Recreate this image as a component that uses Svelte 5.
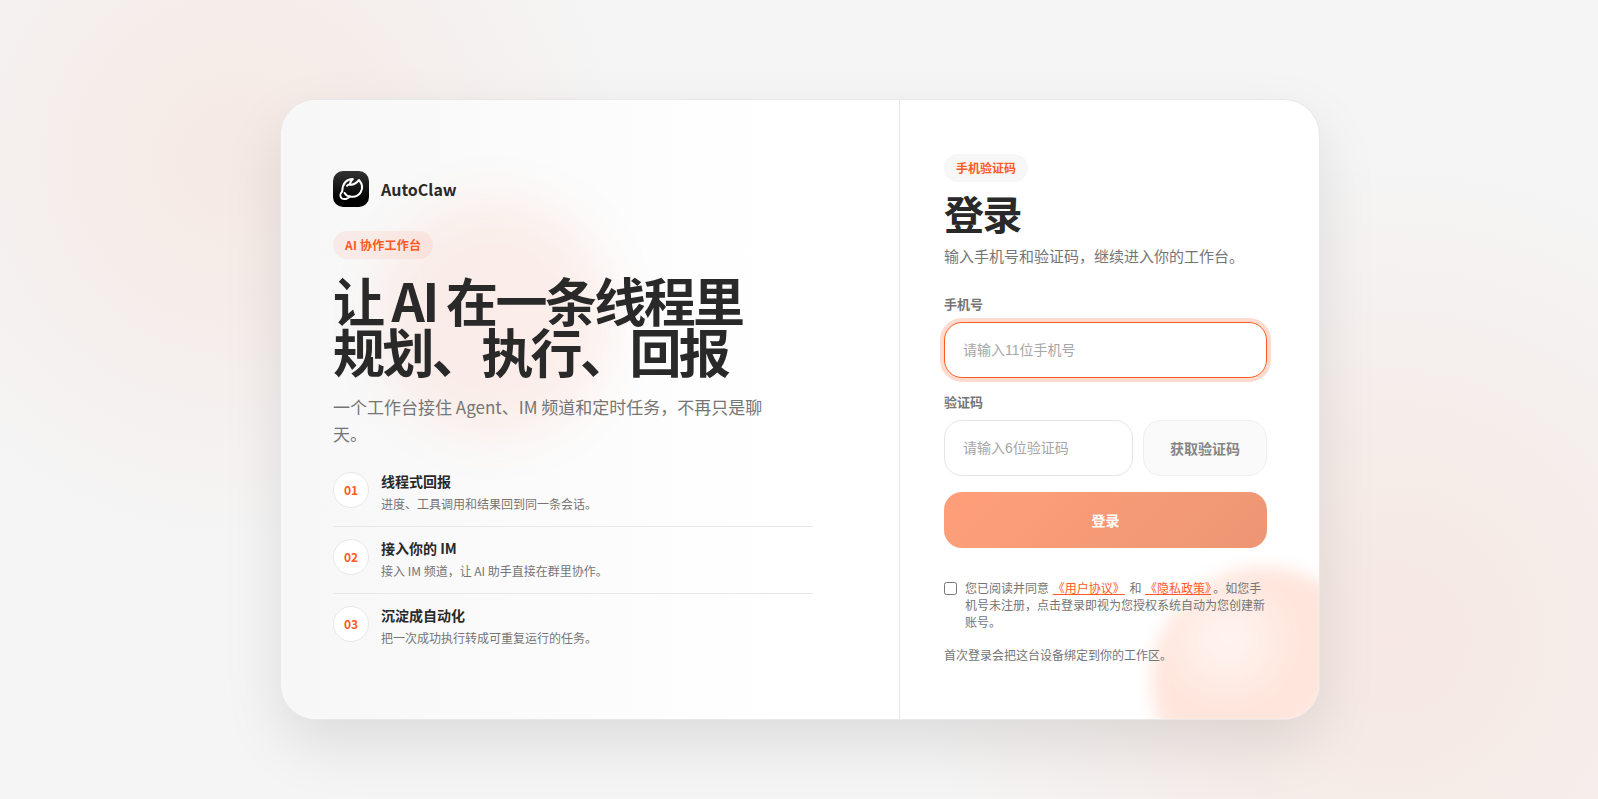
<script>
  let phone = '';
  let code = '';
  let agreed = false;

  const features = [
    { no: '01', title: '线程式回报', desc: '进度、工具调用和结果回到同一条会话。' },
    { no: '02', title: '接入你的 IM', desc: '接入 IM 频道，让 AI 助手直接在群里协作。' },
    { no: '03', title: '沉淀成自动化', desc: '把一次成功执行转成可重复运行的任务。' }
  ];

  function focusOnMount(node) {
    node.focus();
  }
</script>

<main class="page">
  <div class="card">
    <section class="intro">
      <div class="brand">
        <svg class="logo" viewBox="0 0 36 36" aria-hidden="true">
          <defs>
            <linearGradient id="logo-bg" x1="0" y1="0" x2="0" y2="1">
              <stop offset="0" stop-color="#333" />
              <stop offset="0.8" stop-color="#000" />
            </linearGradient>
          </defs>
          <rect width="36" height="36" rx="10" fill="url(#logo-bg)" />
          <g fill="none" stroke="#fff" stroke-width="2" stroke-linecap="round" stroke-linejoin="round">
            <path d="M9.2 20.4 C9.6 13 13 8.2 19.8 8 C18 9.8 16.8 11.6 17 13.6 C20.6 14.4 23.6 11.8 26 9 C29.4 13 30 17.6 27.6 21.4 C25.2 25 21.4 26.4 17 25.4" />
            <path d="M17 13.6 C16 13.2 14.8 13.8 14 14.8" />
            <path d="M9.2 20.4 C7.2 22.4 6.8 25.4 8.6 27.2 C11 28.9 14.8 28 17 25.4 C14.4 25.2 12.6 24 11.6 22" />
          </g>
        </svg>
        <span class="brand-name">AutoClaw</span>
      </div>

      <span class="badge badge-warm">AI 协作工作台</span>
      <h1>让 AI 在一条线程里<br />规划、执行、回报</h1>
      <p class="lead">一个工作台接住 Agent、IM 频道和定时任务，不再只是聊天。</p>

      <ol class="features">
        {#each features as item (item.no)}
          <li>
            <span class="no">{item.no}</span>
            <div>
              <h3>{item.title}</h3>
              <p>{item.desc}</p>
            </div>
          </li>
        {/each}
      </ol>
    </section>

    <section class="login">
      <span class="badge">手机验证码</span>
      <h2>登录</h2>
      <p class="sub">输入手机号和验证码，继续进入你的工作台。</p>

      <form on:submit|preventDefault>
        <label class="field-label" for="phone">手机号</label>
        <input id="phone" class="field" type="tel" placeholder="请输入11位手机号" bind:value={phone} use:focusOnMount />

        <label class="field-label" for="code">验证码</label>
        <div class="code-row">
          <input id="code" class="field" type="text" placeholder="请输入6位验证码" bind:value={code} />
          <button type="button" class="send" disabled={!phone}>获取验证码</button>
        </div>

        <button type="submit" class="submit" disabled={!phone || !code}>登录</button>

        <div class="agree">
          <input id="agree" type="checkbox" bind:checked={agreed} />
          <label for="agree">您已阅读并同意 <a href="#terms">《用户协议》</a> 和 <a href="#privacy">《隐私政策》</a>。如您手机号未注册，点击登录即视为您授权系统自动为您创建新账号。</label>
        </div>
      </form>

      <p class="hint">首次登录会把这台设备绑定到你的工作区。</p>
    </section>
  </div>
</main>

<style>
  :global(body) {
    background: #f5f5f5;
  }

  .page {
    --accent: #ff5a1f;
    --ink: #292929;
    --muted: #757575;
    --line: #e8e8e8;
    box-sizing: border-box;
    min-height: 100vh;
    padding: 20px 0 0 2px;
    display: flex;
    align-items: center;
    justify-content: center;
    font-family: "Noto Sans CJK SC", sans-serif;
    color: var(--ink);
    background:
      radial-gradient(circle at 15% 20%, rgba(255, 96, 40, 0.08), rgba(255, 96, 40, 0.06) 8vw, transparent 24vw),
      radial-gradient(circle at 87% 80%, rgba(255, 96, 40, 0.09), rgba(255, 96, 40, 0.06) 12vw, transparent 30vw),
      #f5f5f5;
  }

  .page *,
  .page *::before {
    box-sizing: border-box;
  }

  h1, h2, h3, p, ol {
    margin: 0;
    padding: 0;
  }

  .card {
    width: 100%;
    max-width: 1040px;
    min-height: 621px;
    display: grid;
    grid-template-columns: 1fr 420px;
    border: 1px solid var(--line);
    border-radius: 36px;
    overflow: hidden;
    background: #fff;
    box-shadow: 0 24px 60px rgba(0, 0, 0, 0.1);
  }

  .intro,
  .login {
    position: relative;
    isolation: isolate;
    display: flex;
    flex-direction: column;
    align-items: flex-start;
    justify-content: center;
  }

  .intro {
    padding: 0 52px;
    background: linear-gradient(90deg, #f7f7f7, #fff 80%);
  }

  .intro::before {
    content: "";
    position: absolute;
    z-index: -1;
    left: 94px;
    top: 98px;
    width: 240px;
    height: 240px;
    border-radius: 50%;
    background: rgba(255, 84, 40, 0.08);
    filter: blur(24px);
  }

  .login {
    padding: 0 52px 2px 44px;
    border-left: 1px solid var(--line);
    overflow: hidden;
  }

  .login::before {
    content: "";
    position: absolute;
    z-index: -1;
    right: -58px;
    bottom: -74px;
    width: 226px;
    height: 226px;
    border-radius: 50%;
    background: radial-gradient(circle at 34% 32%, #fff5f2, #ffe6dd 32%, #fee7df);
    filter: blur(8px);
  }

  .brand {
    display: flex;
    align-items: center;
    gap: 12px;
    margin-bottom: 24px;
  }

  .logo {
    width: 36px;
    height: 36px;
  }

  .brand-name {
    font-size: 16px;
    font-weight: 700;
  }

  .badge {
    padding: 0 12px;
    border-radius: 14px;
    font-size: 12px;
    line-height: 28px;
    font-weight: 700;
    color: var(--accent);
    background: #f7f7f7;
  }

  .badge-warm {
    background: rgba(255, 87, 34, 0.08);
    letter-spacing: 0.02em;
  }

  h1 {
    margin-top: 15px;
    font-size: 52px;
    line-height: 51px;
    font-weight: 700;
    letter-spacing: -0.05em;
  }

  .lead {
    max-width: 440px;
    margin-top: 17px;
    font-size: 17px;
    line-height: 27px;
    color: var(--muted);
  }

  .features {
    width: 100%;
    max-width: 480px;
    margin-top: 13px;
    list-style: none;
  }

  .features li {
    display: flex;
    gap: 12px;
    padding: 12px 0;
  }

  .features li + li {
    border-top: 1px solid var(--line);
  }

  .features li:last-child {
    padding-bottom: 0;
  }

  .no {
    flex: none;
    width: 36px;
    height: 36px;
    border: 1px solid var(--line);
    border-radius: 50%;
    background: #fff;
    color: var(--accent);
    font-size: 12px;
    line-height: 34px;
    font-weight: 700;
    text-align: center;
  }

  .features h3 {
    font-size: 14px;
    line-height: 18px;
    font-weight: 700;
  }

  .features p {
    margin-top: 5px;
    font-size: 12px;
    line-height: 18px;
    color: var(--muted);
  }

  .features li > div {
    padding-bottom: 1px;
  }

  h2 {
    margin-top: 8px;
    font-size: 40px;
    line-height: 46px;
    font-weight: 700;
    letter-spacing: -0.04em;
  }

  .sub {
    margin-top: 8px;
    font-size: 15px;
    line-height: 24px;
    color: var(--muted);
  }

  form {
    width: 100%;
    margin-top: 26px;
    display: flex;
    flex-direction: column;
  }

  .field-label {
    margin-bottom: 8px;
    font-size: 13px;
    line-height: 20px;
    font-weight: 700;
    color: var(--muted);
  }

  .field {
    width: 100%;
    min-width: 0;
    height: 56px;
    margin-bottom: 14px;
    padding: 0 18px;
    border: 1px solid #e4e4e4;
    border-radius: 18px;
    outline: none;
    background: #fff;
    color: var(--ink);
    font: 14px "Liberation Sans", "Noto Sans CJK SC", sans-serif;
  }

  .field::placeholder {
    color: #a6a6a6;
  }

  .field:focus {
    border-color: var(--accent);
    box-shadow: 0 0 0 4px rgba(255, 87, 34, 0.22);
  }

  .code-row {
    display: flex;
    gap: 10px;
  }

  .send,
  .submit {
    height: 56px;
    border-radius: 18px;
    font-family: inherit;
    font-size: 14px;
    font-weight: 700;
  }

  .send {
    flex: none;
    width: 124px;
    border: 1px solid #efefef;
    background: #fafafa;
    color: #858585;
  }

  .submit {
    margin-top: 2px;
    border: none;
    background: linear-gradient(135deg, #ff9f7a, #ed9673);
    color: #fff;
  }

  .agree {
    display: flex;
    gap: 8px;
    margin-top: 31px;
    font-size: 12px;
    line-height: 17px;
    color: var(--muted);
  }

  .agree input {
    flex: none;
    width: 13px;
    height: 13px;
    margin: 3px 0 0;
  }

  .agree a {
    margin: 0 2px 0 1px;
    color: var(--accent);
    text-decoration: underline;
  }

  .hint {
    margin-top: 16px;
    font-size: 12px;
    line-height: 18px;
    color: var(--muted);
  }
</style>
